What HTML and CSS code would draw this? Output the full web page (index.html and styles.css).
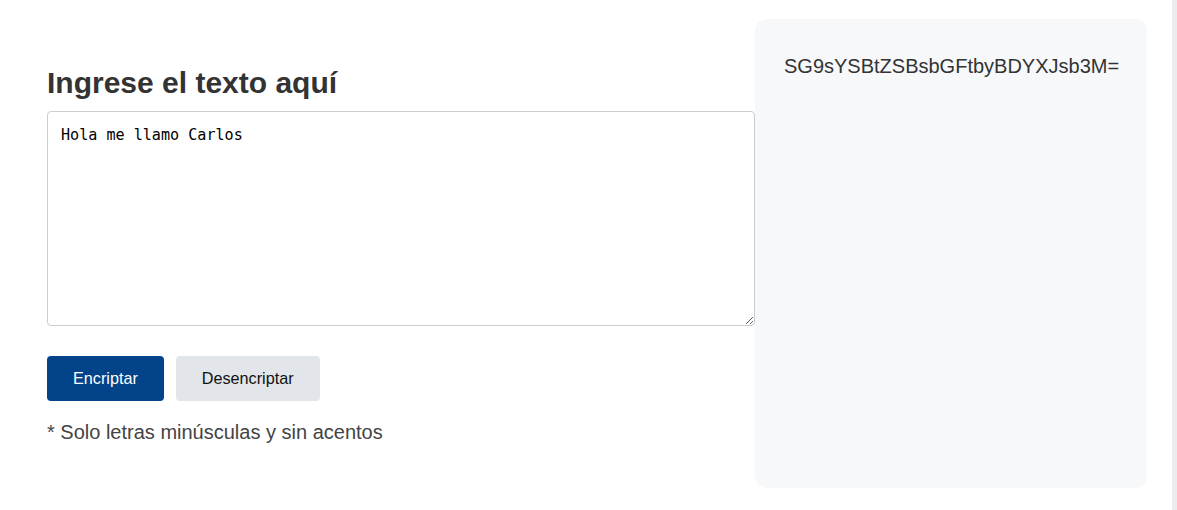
FILE: index.html
```html
<!DOCTYPE html>
<html lang="es">
<head>
<meta charset="utf-8">
<title>Encriptador</title>
<link rel="stylesheet" href="styles.css">
</head>
<body>
<div class="page">
  <section class="editor">
    <h1 class="title">Ingrese el texto aquí</h1>
    <textarea class="input" spellcheck="false">Hola me llamo Carlos</textarea>
    <div class="actions">
      <button class="btn btn-primary" type="button">Encriptar</button>
      <button class="btn btn-secondary" type="button">Desencriptar</button>
    </div>
    <p class="note">* Solo letras minúsculas y sin acentos</p>
  </section>
  <aside class="output">
    <p class="output-text">SG9sYSBtZSBsbGFtbyBDYXJsb3M=</p>
  </aside>
  <div class="edge"></div>
</div>
</body>
</html>
```
FILE: styles.css
```css
html, body {
  margin: 0;
  padding: 0;
  background: #ffffff;
  font-family: "Liberation Sans", Arial, sans-serif;
}

.page {
  display: flex;
  align-items: flex-start;
  height: 510px;
  overflow: hidden;
}

.editor {
  width: 708px;
  padding-left: 47px;
  padding-top: 65px;
  flex: none;
}

.title {
  margin: 0 0 10px;
  font-size: 30px;
  line-height: 36px;
  font-weight: 700;
  color: #333333;
}

.input {
  display: block;
  box-sizing: border-box;
  width: 708px;
  height: 215px;
  margin: 0;
  padding: 14px 12px 14px 13px;
  border: 1px solid #cccccc;
  border-radius: 4px;
  font-family: "DejaVu Sans Mono", "Liberation Mono", monospace;
  font-size: 15.1px;
  color: #000000;
  background: #ffffff;
  outline: none;
}

.actions {
  display: flex;
  gap: 12px;
  margin-top: 30px;
}

.btn {
  height: 45px;
  padding: 0 26px;
  border: none;
  border-radius: 4px;
  font-family: "Liberation Sans", Arial, sans-serif;
  font-size: 16.2px;
}

.btn-primary {
  background: #02438a;
  color: #ffffff;
}

.btn-secondary {
  background: #e2e5ea;
  color: #111111;
}

.note {
  margin: 20px 0 0;
  font-size: 20px;
  line-height: 23px;
  color: #444444;
}

.output {
  flex: none;
  box-sizing: border-box;
  width: 392px;
  height: 469px;
  margin-top: 19px;
  padding: 36px 29px;
  background: #f7f8fa;
  border-radius: 12px;
}

.output-text {
  margin: 0;
  font-size: 20px;
  line-height: 23px;
  color: #333333;
}

.edge {
  flex: none;
  width: 5px;
  height: 510px;
  margin-left: auto;
  background: #ebebf0;
}
```
